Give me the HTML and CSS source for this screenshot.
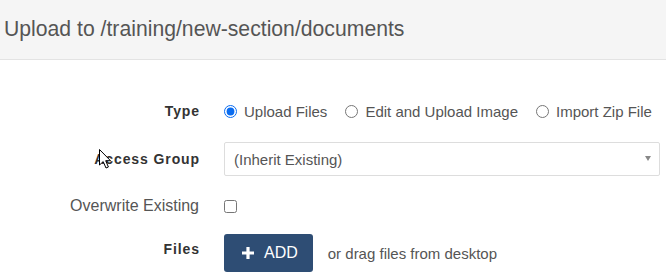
FILE: index.html
```html
<!DOCTYPE html>
<html lang="en">
<head>
    <meta charset="UTF-8">
    <meta name="viewport" content="width=device-width, initial-scale=1.0">
    <title>Upload</title>
    <link rel="stylesheet" href="styles.css">
</head>
<body>
    <div class="upload-dialog">
        <div class="dialog-header">
            <h3 class="dialog-title">Upload to /training/new-section/documents</h3>
        </div>
        <form class="upload-form">
            <div class="form-row">
                <label class="form-label">Type</label>
                <div class="form-control radio-group">
                    <label class="radio-option"><input type="radio" name="type" checked> Upload Files</label>
                    <label class="radio-option"><input type="radio" name="type"> Edit and Upload Image</label>
                    <label class="radio-option"><input type="radio" name="type"> Import Zip File</label>
                </div>
            </div>
            <div class="form-row">
                <label class="form-label" for="access-group">Access Group</label>
                <div class="form-control select-wrap">
                    <select id="access-group">
                        <option>(Inherit Existing)</option>
                    </select>
                </div>
            </div>
            <div class="form-row">
                <label class="form-label light" for="overwrite">Overwrite Existing</label>
                <div class="form-control">
                    <input type="checkbox" id="overwrite">
                </div>
            </div>
            <div class="form-row files-row">
                <label class="form-label">Files</label>
                <div class="form-control">
                    <button type="button" class="add-btn">
                        <svg width="12" height="12" viewBox="0 0 12 12"><path d="M6 0v12M0 6h12" stroke="#fff" stroke-width="3.2"/></svg>
                        ADD
                    </button>
                    <span class="drop-hint">or drag files from desktop</span>
                </div>
            </div>
        </form>
        <!-- mouse pointer captured in the screenshot -->
        <svg class="mouse-cursor" width="13" height="20" viewBox="0 0 13 20">
            <path d="M0.5 0.5 L0.5 16 L4.2 12.6 L7 19 L9.4 18 L6.7 11.7 L11.5 11.7 Z" fill="#fff" stroke="#000" stroke-width="1" stroke-linejoin="round"/>
        </svg>
    </div>
</body>
</html>
```

FILE: styles.css
```css
/* styles.css */

body {
    font-family: "Liberation Sans", Arial, sans-serif;
    background-color: #ffffff;
    margin: 0;
    padding: 0;
}

.upload-dialog {
    position: relative;
}

.dialog-header {
    background-color: #f5f5f5;
    border-bottom: 1px solid #e3e3e3;
    height: 59px;
    padding-left: 4px;
}

.dialog-title {
    margin: 0;
    font-size: 21.2px;
    font-weight: normal;
    line-height: 58px;
    color: #555555;
}

.upload-form {
    padding: 34px 6px 0 0;
}

.form-row {
    display: flex;
    align-items: center;
    gap: 24px;
    min-height: 34px;
    margin-bottom: 13px;
}

.form-row:first-child {
    margin-bottom: 14px;
}

.form-label {
    width: 200px;
    flex-shrink: 0;
    text-align: right;
    font-size: 14px;
    font-weight: bold;
    color: #333333;
    letter-spacing: 0.9px;
}

.form-label.light {
    width: 199px;
    padding-right: 1px;
    font-size: 16px;
    font-weight: normal;
    letter-spacing: 0;
    color: #555555;
}

.form-control {
    flex: 1;
    display: flex;
    align-items: center;
    font-size: 15px;
    color: #555555;
}

.radio-group {
    gap: 18px;
}

.radio-option {
    display: flex;
    align-items: center;
    gap: 7px;
}

input[type="radio"],
input[type="checkbox"] {
    margin: 0;
    width: 13px;
    height: 13px;
    accent-color: #0a6cf0;
}

.select-wrap {
    position: relative;
}

.select-wrap select {
    appearance: none;
    width: 100%;
    height: 34px;
    padding: 0 24px 0 9px;
    border: 1px solid #dddddd;
    border-radius: 2px;
    background-color: #ffffff;
    font-family: inherit;
    font-size: 15px;
    color: #555555;
}

.select-wrap::after {
    content: "";
    position: absolute;
    right: 9px;
    top: 14px;
    border-left: 3.5px solid transparent;
    border-right: 3.5px solid transparent;
    border-top: 5px solid #888888;
    pointer-events: none;
}

.files-row {
    align-items: flex-start;
    margin-top: -2px;
}

.files-row .form-label {
    padding-top: 7px;
}

.add-btn {
    display: flex;
    align-items: center;
    gap: 10px;
    height: 38px;
    padding: 0 15px 0 18px;
    background-color: #2e4d74;
    color: #ffffff;
    border: none;
    border-radius: 3px;
    font-family: inherit;
    font-size: 16px;
    cursor: pointer;
}

.drop-hint {
    margin-left: 15px;
}

.mouse-cursor {
    position: absolute;
    left: 99px;
    top: 149px;
}
```
